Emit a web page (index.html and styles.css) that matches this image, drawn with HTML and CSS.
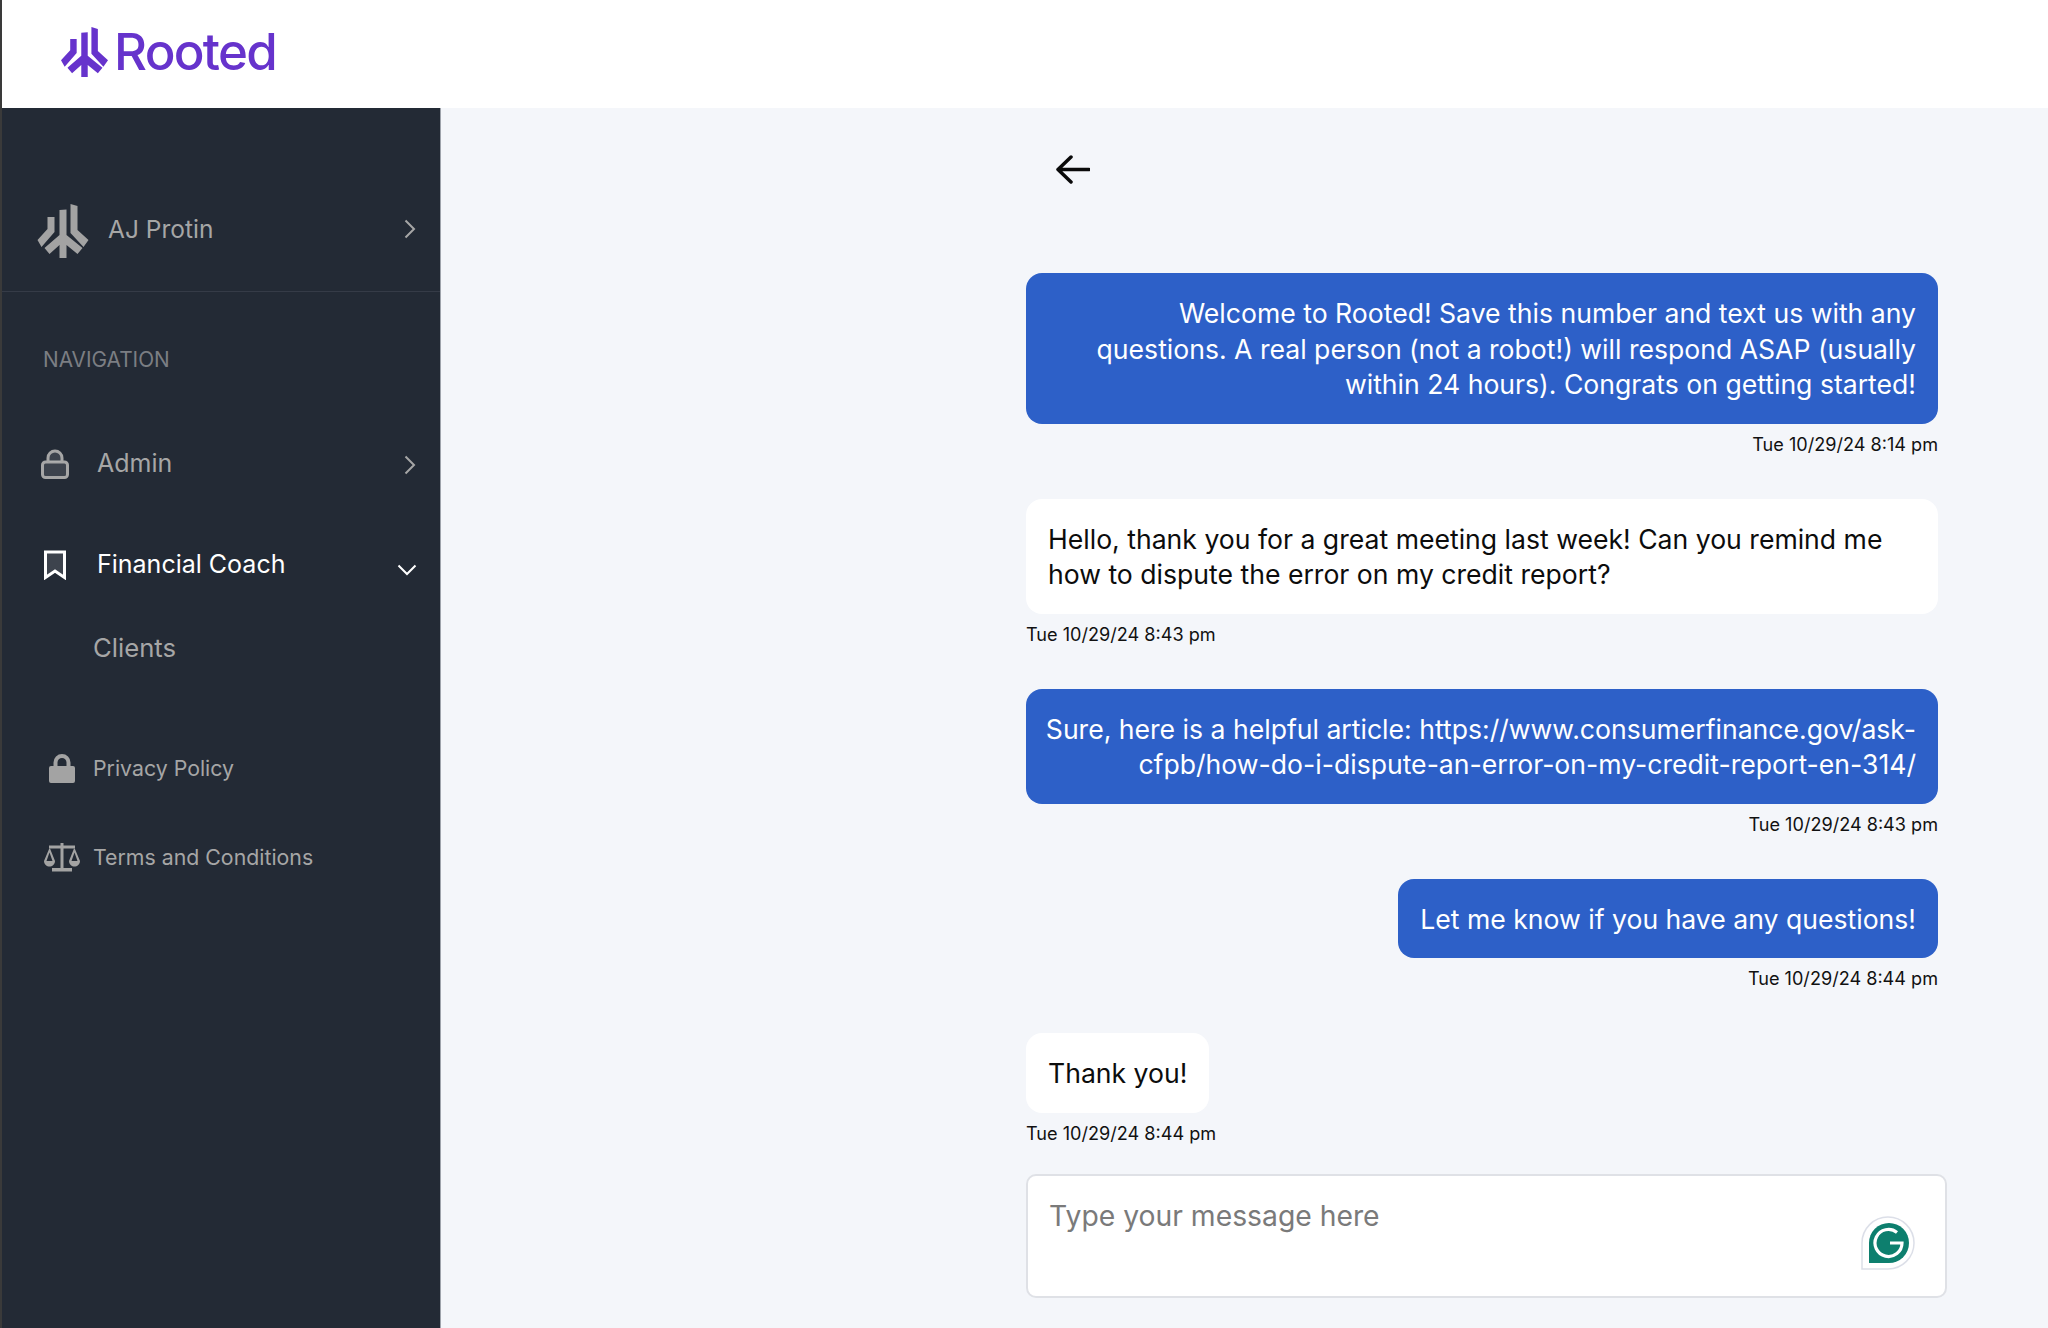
FILE: index.html
```html
<!DOCTYPE html>
<html lang="en">
<head>
<meta charset="utf-8">
<title>Rooted</title>
<link rel="stylesheet" href="styles.css">
</head>
<body>
<svg class="defs" width="0" height="0" aria-hidden="true">
  <symbol id="mark" viewBox="0 0 51 54">
    <path d="M10 13H17V28L4 43 0 36 10 25Z"/>
    <path d="M33 0 40 2V26L51 36 46 43 33 29Z"/>
    <path d="M22 6 29 5.5V31L45 44 40 50 29 41V54H22V41L12 50 7 44 22 31Z"/>
  </symbol>
</svg>
<div class="app">
  <header class="topbar">
    <div class="logo">
      <svg class="logo-mark"><use href="#mark"/></svg>
      <span class="logo-text">Rooted</span>
    </div>
  </header>
  <div class="body">
    <aside class="sidebar">
      <div class="user">
        <svg class="user-mark"><use href="#mark"/></svg>
        <span class="user-name">AJ Protin</span>
        <svg class="chev" viewBox="0 0 12 20"><path d="M1.5 1.5 10 10 1.5 18.5"/></svg>
      </div>
      <div class="nav-title">NAVIGATION</div>
      <div class="nav-item nav-admin">
        <svg class="nav-icon" viewBox="0 0 28 30"><rect x="1.5" y="13" width="25" height="15.5" rx="3" class="ico-line"/><path d="M7 13V9a7 7 0 0 1 14 0v4" class="ico-line"/></svg>
        <span>Admin</span>
        <svg class="chev" viewBox="0 0 12 20"><path d="M1.5 1.5 10 10 1.5 18.5"/></svg>
      </div>
      <div class="nav-item nav-active">
        <svg class="nav-icon" viewBox="0 0 28 30"><path d="M4.5 2h19v25.5L14 21 4.5 27.5Z" class="ico-line"/></svg>
        <span>Financial Coach</span>
        <svg class="chev-down" viewBox="0 0 20 12"><path d="M1.5 1.5 10 10 18.500 1.500"/></svg>
      </div>
      <div class="sub-item">Clients</div>
      <div class="foot-item foot-privacy">
        <svg class="foot-icon" viewBox="0 0 38 30"><path d="M19 1a8.500 8.500 0 0 0-8.500 8.500V13H8a2 2 0 0 0-2 2v13a2 2 0 0 0 2 2h22a2 2 0 0 0 2-2V15a2 2 0 0 0-2-2h-2.500V9.500A8.500 8.500 0 0 0 19 1Zm-4.500 12V9.500a4.500 4.500 0 0 1 9 0V13Z" class="ico-fill"/></svg>
        <span>Privacy Policy</span>
      </div>
      <div class="foot-item">
        <svg class="foot-icon" viewBox="0 0 38 30"><path d="M17.500 1h3v2.500H32V6h-.5l5.500 13c0 3.500-2.800 5.500-5.500 5.500S26 22.500 26 19L31 6.500H20.500V26H29v3.500H9V26h8.500V6.500H7L12 19c0 3.500-2.800 5.500-5.500 5.500S1 22.500 1 19L6.500 6H6V3.500h11.500ZM6.500 10.500 3.500 19h6ZM31.500 10.500 28.500 19h6Z" class="ico-fill" fill-rule="evenodd"/></svg>
        <span>Terms and Conditions</span>
      </div>
    </aside>
    <main class="main">
      <div class="thread">
        <svg class="back" viewBox="0 0 34 30"><path d="M33 14.500H3M15 2 2 14.500 15 27"/></svg>
        <div class="msg out first">
          <div class="bubble">Welcome to Rooted! Save this number and text us with any questions. A real person (not a robot!) will respond ASAP (usually within 24 hours). Congrats on getting started!</div>
          <div class="time">Tue 10/29/24 8:14 pm</div>
        </div>
        <div class="msg in">
          <div class="bubble">Hello, thank you for a great meeting last week! Can you remind me how to dispute the error on my credit report?</div>
          <div class="time">Tue 10/29/24 8:43 pm</div>
        </div>
        <div class="msg out">
          <div class="bubble bubble-link">Sure, here is a helpful article: https://www.consumerfinance.gov/ask-cfpb/how-do-i-dispute-an-error-on-my-credit-report-en-314/</div>
          <div class="time">Tue 10/29/24 8:43 pm</div>
        </div>
        <div class="msg out">
          <div class="bubble">Let me know if you have any questions!</div>
          <div class="time">Tue 10/29/24 8:44 pm</div>
        </div>
        <div class="msg in">
          <div class="bubble">Thank you!</div>
          <div class="time">Tue 10/29/24 8:44 pm</div>
        </div>
        <div class="composer">
          <span class="placeholder">Type your message here</span>
          <svg class="grammarly" viewBox="0 0 54 54">
            <path d="M1 53V27a26 26 0 1 1 26 26Z" fill="#fff" stroke="#dcdfe8" stroke-width="1.500"/>
            <path d="M8 47V27a20 20 0 1 1 20 20Z" fill="#0d7f6e"/>
            <path d="M36 16.500A13.500 13.500 0 1 0 41 27H29" fill="none" stroke="#fff" stroke-width="3.200"/>
          </svg>
        </div>
      </div>
    </main>
  </div>
</div>
</body>
</html>
```
FILE: styles.css
```css
* { box-sizing: border-box; }
html, body { margin: 0; height: 100%; }
body { font-family: "Inter", "Liberation Sans", sans-serif; overflow: hidden; background: #f4f6fa; }
.defs { position: absolute; }
.app { display: flex; flex-direction: column; height: 1328px; border-left: 2px solid #3a3a3a; }
.topbar { height: 108px; flex: none; background: #fff; display: flex; align-items: center; padding-left: 59px; }
.logo { display: flex; align-items: center; gap: 6px; color: #6633cc; margin-top: -4px; }
.logo-mark { width: 47px; height: 50px; fill: #6633cc; }
.logo-text { font-size: 51px; font-weight: 500; letter-spacing: -1.700px; line-height: 50px; }
.body { flex: 1; display: flex; min-height: 0; }
.sidebar { width: 439px; flex: none; background: #232a35; border-right: 1px solid #9ea3ab; color: #a6a6a6; }
.user { height: 184px; padding: 96px 24px 0 35px; display: flex; align-items: flex-start; border-bottom: 1px solid #353b47; }
.user-mark { width: 52px; height: 54px; fill: #a3a3a3; flex: none; }
.user-name { font-size: 24.500px; margin-left: 19px; line-height: 50px; flex: 1; }
.user .chev { margin-top: 15px; }
.chev { width: 12px; height: 20px; flex: none; fill: none; stroke: #a6a6a6; stroke-width: 2; }
.chev-down { width: 20px; height: 12px; flex: none; margin-top: 10px; fill: none; stroke: #fff; stroke-width: 2; }
.nav-title { font-size: 20.800px; color: #7b7e83; padding: 54px 0 0 41px; line-height: 28px; }
.nav-item { display: flex; align-items: center; padding-left: 39px; font-size: 25px; height: 40px; padding-right: 24px; }
.nav-item span { margin-left: 28px; flex: 1; margin-top: -2px; }
.nav-admin { margin-top: 70px; }
.nav-admin .chev { margin-top: 1px; }
.nav-active { margin-top: 61px; color: #fff; }
.nav-active .chev-down { margin-right: -1px; }
.nav-icon { width: 28px; height: 30px; flex: none; }
.ico-line { fill: rgba(255,255,255,.12); stroke: currentColor; stroke-width: 3; }
.sub-item { font-size: 25.700px; margin: 44px 0 0 91px; line-height: 38px; }
.foot-item { display: flex; align-items: center; height: 40px; font-size: 21.300px; padding-left: 41px; margin-top: 49px; }
.foot-item span { margin-left: 12px; }
.foot-privacy { margin-top: 81px; }
.foot-icon { width: 38px; height: 30px; flex: none; }
.ico-fill { fill: #a3a3a3; }
.main { flex: 1; min-width: 0; }
.thread { width: 912px; margin-left: 585px; display: flex; flex-direction: column; }
.back { width: 34px; height: 30px; margin: 47px 0 0 30px; fill: none; stroke: #0a0a0a; stroke-width: 3.500; stroke-linecap: round; stroke-linejoin: round; }
.msg { display: flex; flex-direction: column; margin-top: 43px; }
.msg.first { margin-top: 88px; }
.msg.out { align-items: flex-end; }
.msg.in { align-items: flex-start; }
.bubble { padding: 23px 22px 21px; font-size: 26.600px; line-height: 35.500px; border-radius: 16px; max-width: 912px; }
.bubble-link { padding-left: 12px; }
.out .bubble { background: #2d60c8; color: #fff; text-align: right; }
.in .bubble { background: #fff; color: #0c0c0c; }
.time { font-size: 18.100px; line-height: 24px; color: #111; margin-top: 8px; }
.composer { position: relative; width: 921px; height: 124px; margin-top: 29px; flex: none; background: #fff; border: 2px solid #dfe1e6; border-radius: 10px; padding: 21px; }
.placeholder { font-size: 28.300px; line-height: 38px; color: #7a7a7a; }
.grammarly { position: absolute; right: 30px; top: 40px; width: 54px; height: 54px; }
```
